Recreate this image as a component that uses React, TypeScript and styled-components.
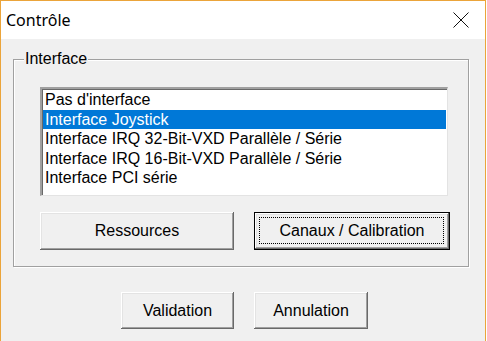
import styled, { createGlobalStyle } from 'styled-components';
import { useState } from 'react';

const GlobalStyle = createGlobalStyle`
  html, body {
    margin: 0;
    padding: 0;
    background: #ffffff;
  }
`;

const Window = styled.div`
  width: 486px;
  height: 341px;
  box-sizing: border-box;
  border: 1px solid #eba43a;
  border-bottom: none;
  display: flex;
  flex-direction: column;
  font-family: "Liberation Sans", Arial, sans-serif;
  color: #000;
`;

const TitleBar = styled.div`
  height: 38px;
  flex-shrink: 0;
  background: #ffffff;
  display: flex;
  align-items: center;
  justify-content: space-between;
  padding: 0 16px 0 5px;
`;

const Title = styled.span`
  font-family: "Noto Sans", "Open Sans", sans-serif;
  font-size: 16px;
  margin-top: -1px;
`;

const CloseIcon = () => (
  <svg width="16" height="16" viewBox="0 0 16 16">
    <path d="M0.5 0.5 L15.5 15.5 M15.5 0.5 L0.5 15.5" stroke="#111" strokeWidth="1" fill="none" />
  </svg>
);

const Body = styled.div`
  flex: 1;
  background: #f0f0f0;
  padding: 20px 16px 0 12px;
  display: flex;
  flex-direction: column;
`;

const Group = styled.div`
  position: relative;
  width: 456px;
  height: 208px;
  box-sizing: border-box;
  border: 1px solid #a0a0a0;
  box-shadow: inset 1px 1px 0 #ffffff, 1px 1px 0 #ffffff;
  padding: 27px 0 0 26px;
`;

const GroupLabel = styled.span`
  position: absolute;
  top: -10px;
  left: 10px;
  padding: 0 1px 0 1px;
  background: #f0f0f0;
  font-size: 16px;
  line-height: 18px;
`;

const ListBox = styled.ul`
  list-style: none;
  margin: 0;
  width: 408px;
  height: 109px;
  box-sizing: border-box;
  background: #ffffff;
  padding: 1px 1px;
  border-top: 2px solid #a0a0a0;
  border-left: 2px solid #a0a0a0;
  border-right: 1px solid #e3e3e3;
  border-bottom: 1px solid #e3e3e3;
  box-shadow: inset 1px 1px 0 #696969;
`;

const Item = styled.li<{ $selected?: boolean }>`
  height: 19.5px;
  line-height: 19.5px;
  padding-left: 2px;
  font-size: 16px;
  white-space: nowrap;
  cursor: default;
  background: ${(p) => (p.$selected ? '#0078d7' : 'transparent')};
  color: ${(p) => (p.$selected ? '#ffffff' : '#000000')};
`;

const ButtonRow = styled.div<{ $left: number; $top: number }>`
  display: flex;
  gap: 20px;
  padding-left: ${(p) => p.$left}px;
  margin-top: ${(p) => p.$top}px;
`;

const Button = styled.button<{ $width: number; $height: number; $default?: boolean }>`
  position: relative;
  width: ${(p) => p.$width}px;
  height: ${(p) => p.$height}px;
  box-sizing: border-box;
  background: #f0f0f0;
  font-family: "Liberation Sans", Arial, sans-serif;
  font-size: 16px;
  color: #000;
  padding: 0;
  border: ${(p) => (p.$default ? '1px solid #000' : 'none')};
  box-shadow: inset -1px -1px 0 #696969, inset 1px 1px 0 #ffffff, inset -2px -2px 0 #a0a0a0,
    inset 2px 2px 0 #e3e3e3;
  cursor: default;
`;

const FocusRect = styled.span`
  position: absolute;
  inset: 4px 5px 5px 4px;
  border: 1px dotted #000;
`;

const items = [
  "Pas d'interface",
  'Interface Joystick',
  'Interface IRQ 32-Bit-VXD Parallèle / Série',
  'Interface IRQ 16-Bit-VXD Parallèle / Série',
  'Interface PCI série',
];

export default function App() {
  const [selected, setSelected] = useState(1);

  return (
    <>
      <GlobalStyle />
      <Window>
        <TitleBar>
          <Title>Contrôle</Title>
          <CloseIcon />
        </TitleBar>
        <Body>
          <Group>
            <GroupLabel>Interface</GroupLabel>
            <ListBox>
              {items.map((label, i) => (
                <Item key={label} $selected={i === selected} onClick={() => setSelected(i)}>
                  {label}
                </Item>
              ))}
            </ListBox>
            <ButtonRow $left={0} $top={16}>
              <Button $width={194} $height={38}>Ressources</Button>
              <Button $width={196} $height={38} $default>
                <FocusRect />
                Canaux / Calibration
              </Button>
            </ButtonRow>
          </Group>
          <ButtonRow $left={108} $top={25}>
            <Button $width={113} $height={37}>Validation</Button>
            <Button $width={114} $height={37}>Annulation</Button>
          </ButtonRow>
        </Body>
      </Window>
    </>
  );
}
